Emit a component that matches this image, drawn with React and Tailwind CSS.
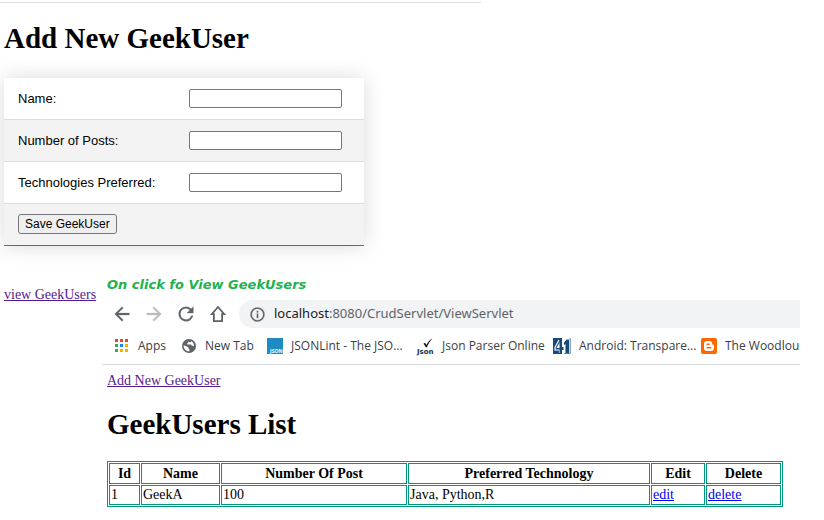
import React from "react";

const serif = "font-['Liberation_Serif',serif]";
const sans = "font-['Liberation_Sans',sans-serif]";

const fields = [
  { id: "name", label: "Name:" },
  { id: "posts", label: "Number of Posts:" },
  { id: "technologies", label: "Technologies Preferred:" },
];

function MaterialIcon({ d, className }) {
  return (
    <svg viewBox="0 0 24 24" className={className} fill="currentColor" stroke="currentColor" strokeWidth="0.3" aria-hidden="true">
      <path d={d} />
    </svg>
  );
}

function AppsIcon() {
  const colors = ["#ea4335", "#ea4335", "#ea4335", "#34a853", "#1a87f0", "#f9ab00", "#34a853", "#f9ab00", "#f9ab00"];
  return (
    <svg viewBox="0 0 16 16" className="size-4 shrink-0" aria-hidden="true" shapeRendering="crispEdges">
      {colors.map((c, i) => (
        <rect key={i} x={1 + (i % 3) * 5} y={1 + Math.floor(i / 3) * 5} width="3" height="3" fill={c} />
      ))}
    </svg>
  );
}

function GlobeIcon() {
  return (
    <svg viewBox="0 0 16 16" className="size-4 shrink-0" aria-hidden="true">
      <circle cx="8" cy="8" r="7" fill="#5f6368" />
      <path d="M2.600 7.200 6 8.400c.9.300 1.400.8 1.400 1.600v.6l1 .6v2c-3.400.2-6-2.400-5.800-6z" fill="#fff" />
      <path d="M7.300 3.200c.2 1-.1 1.700-1.100 2v1.200h3.200c.9 0 1.200.5 1.200 1.300h1.100c.5 0 .9.400 1.200.9.500-2.700-.8-4.700-2.900-5.700 0 1-.6 1.400-1.400 1.400z" fill="#fff" />
    </svg>
  );
}

function JsonLintIcon() {
  return (
    <svg viewBox="0 0 16 16" className="size-4 shrink-0" aria-hidden="true">
      <rect width="16" height="16" fill="#1e8bc3" />
      <text x="3" y="15" fontSize="5" fontWeight="700" fontFamily="Open Sans, sans-serif" fill="#fff">JSON</text>
    </svg>
  );
}

function JsonParserIcon() {
  return (
    <svg viewBox="0 0 16 16" className="size-4 shrink-0 overflow-visible" aria-hidden="true">
      <path d="M5.500 5.500 7 4.800l1.300 2.200C10 4 12 1.800 14.500.2 12 3 10 6.200 8.700 9.600H8z" fill="#111" />
      <text x="-1" y="15.500" fontSize="7" fontWeight="700" fontFamily="DejaVu Sans, sans-serif" fill="#0b2f4f">Json</text>
    </svg>
  );
}

function FortyOneIcon() {
  return (
    <svg viewBox="0 0 18 16" className="h-4 w-[18px] shrink-0" aria-hidden="true">
      <rect width="9" height="16" fill="#174a7c" />
      <path d="M6 2 2 9.500V12h4.500v3M6.500 6v3.500H4.500z" fill="none" stroke="#fff" strokeWidth="1.200" />
      <path d="M6.500 2H9v7h1.500v3H9v3.500H6.500z" fill="#174a7c" />
      <path d="M11 4.500 13.500 1.500h2.500V15h-3.500V6l-1.500 1z" fill="#174a7c" />
      <path d="M17.200 0v15.500h-6" fill="none" stroke="#5580a6" />
    </svg>
  );
}

function BloggerIcon() {
  return (
    <svg viewBox="0 0 16 16" className="size-4 shrink-0" aria-hidden="true">
      <rect width="16" height="16" rx="2" fill="#ff6600" />
      <path fillRule="evenodd" d="M6 3h2.500A2.700 2.700 0 0 1 11.200 5.700c0 .8.300 1 1 1s.8.400.8.900V10a3 3 0 0 1-3 3H6a3 3 0 0 1-3-3V6a3 3 0 0 1 3-3zm.2 2.500a.7.7 0 0 0 0 1.500h2a.7.7 0 0 0 0-1.500zm0 3.500a.7.7 0 0 0 0 1.500h3.600a.7.7 0 0 0 0-1.500z" fill="#fff" />
    </svg>
  );
}

const bookmarks = [
  { label: "Apps", Icon: AppsIcon, width: "w-[67px]" },
  { label: "New Tab", Icon: GlobeIcon, width: "w-[86px]" },
  { label: "JSONLint - The JSO...", Icon: JsonLintIcon, width: "w-[151px]" },
  { label: "Json Parser Online", Icon: JsonParserIcon, width: "w-[135px]" },
  { label: "Android: Transpare...", Icon: FortyOneIcon, width: "w-[148px]" },
  { label: "The Woodlou", Icon: BloggerIcon, width: "w-auto" },
];

function AddUserForm() {
  return (
    <form className={`${sans} ml-1 max-w-[360px] border-b border-[#009879] text-[13px] leading-5 text-black shadow-[0_0_20px_rgba(0,0,0,0.15)]`}>
      {fields.map((f) => (
        <div key={f.id} className="flex h-[42px] items-center border-b border-[#dddddd] bg-white pr-[22px] pl-3.5 even:bg-[#f3f3f3]">
          <label htmlFor={f.id} className="w-[171px] shrink-0">{f.label}</label>
          <input id={f.id} type="text" className="h-[19px] min-w-0 flex-1 rounded-xs border border-[#767676] bg-white px-1" />
        </div>
      ))}
      <div className="flex h-[41px] items-start bg-[#f3f3f3] px-3.5 pt-2.5">
        <button type="button" className="h-5 rounded-[3px] border border-[#767676] bg-[#efefef] px-1.5 text-xs">
          <span className="block leading-4">Save GeekUser</span>
        </button>
      </div>
    </form>
  );
}

function BrowserBar() {
  return (
    <div className="border-b border-[#dadce0] text-[#3c4043]">
      <div className="flex h-7 items-center gap-2.5 pl-[9px]">
        <button type="button" aria-label="Back" className="text-[#5f6368]">
          <MaterialIcon className="size-[22px]" d="M20 11H7.830l5.590-5.590L12 4l-8 8 8 8 1.410-1.410L7.830 13H20v-2z" />
        </button>
        <button type="button" aria-label="Forward" className="text-[#babcbe]">
          <MaterialIcon className="size-[22px]" d="M12 4l-1.410 1.410L16.170 11H4v2h12.170l-5.580 5.590L12 20l8-8z" />
        </button>
        <button type="button" aria-label="Reload" className="text-[#5f6368]">
          <MaterialIcon className="size-[22px]" d="M17.650 6.350A7.958 7.958 0 0 0 12 4a8 8 0 1 0 7.730 10h-2.080A6 6 0 1 1 12 6c1.660 0 3.140.690 4.220 1.780L13 11h7V4z" />
        </button>
        <button type="button" aria-label="Home" className="text-[#5f6368]">
          <svg viewBox="0 0 22 22" className="size-[22px]" fill="none" stroke="currentColor" strokeWidth="1.800" aria-hidden="true">
            <path d="M11 4 4.800 11.100H6.900V18.100h8.200v-7h2.100z" />
          </svg>
        </button>
        <div className="flex h-7 min-w-0 flex-1 items-center gap-2 rounded-l-full bg-[#f1f3f4] pl-2.5">
          <MaterialIcon className="size-[17px] shrink-0 text-[#5f6368]" d="M11 7h2v2h-2zm0 4h2v6h-2zm1-9a10 10 0 1 0 0 20 10 10 0 0 0 0-20zm0 18a8 8 0 1 1 0-16 8 8 0 0 1 0 16z" />
          <p className="truncate font-['Noto_Sans',sans-serif] text-[13px] text-[#5f6368]">
            <span className="text-[#202124]">localhost</span>:8080/CrudServlet/ViewServlet
          </p>
        </div>
      </div>
      <nav className="flex h-9 items-center overflow-hidden pl-3 font-['Open_Sans',sans-serif]">
        {bookmarks.map(({ label, Icon, width }) => (
          <a key={label} href="#" className={`flex shrink-0 items-center gap-2 text-xs whitespace-nowrap ${width}`}>
            <Icon />
            {label}
          </a>
        ))}
      </nav>
    </div>
  );
}

const columns = [
  ["Id", "w-[31px]"],
  ["Name", "w-[79px]"],
  ["Number Of Post", "w-[186px]"],
  ["Preferred Technology", "w-[242px]"],
  ["Edit", "w-[54px]"],
  ["Delete", "w-[75px]"],
];

const cell = "border border-[#009879] px-px";

function UsersTable() {
  return (
    <table className="w-full max-w-[676px] table-fixed border-separate border-spacing-px border border-[#009879] text-sm leading-[18px]">
      <colgroup>
        {columns.map(([name, width]) => (
          <col key={name} className={width} />
        ))}
      </colgroup>
      <thead>
        <tr>
          {columns.map(([name]) => (
            <th key={name} className={`${cell} h-[21px] text-center font-bold whitespace-nowrap`}>{name}</th>
          ))}
        </tr>
      </thead>
      <tbody>
        <tr>
          <td className={cell}>1</td>
          <td className={cell}>GeekA</td>
          <td className={cell}>100</td>
          <td className={cell}>Java, Python,R</td>
          <td className={cell}><a href="#" className="text-[#0000ee] underline">edit</a></td>
          <td className={cell}><a href="#" className="text-[#0000ee] underline">delete</a></td>
        </tr>
      </tbody>
    </table>
  );
}

export default function App() {
  return (
    <main className={`${serif} min-h-screen bg-white pt-0.5 text-black`}>
      <hr className="max-w-[481px] border-[#dadce0]" />
      <h1 className="mt-[19px] mb-6 ml-1 text-[29px] leading-8 font-bold">Add New GeekUser</h1>
      <AddUserForm />
      <div className="mt-[29px] flex items-start">
        <a href="#" className="mt-2.5 ml-1 w-[98px] shrink-0 text-sm leading-5 whitespace-nowrap text-[#551a8b] underline">view GeekUsers</a>
        <section className="mr-6 min-w-0 flex-1">
          <p className="mb-[5px] pl-[5px] font-['DejaVu_Sans',sans-serif] text-[13px] leading-5 font-bold text-[#22b14c] italic">On click fo View GeekUsers</p>
          <BrowserBar />
          <div className="pt-1.5 pl-[5px]">
            <a href="#" className="block text-sm leading-5 text-[#551a8b] underline">Add New GeekUser</a>
            <h1 className="mt-[17px] mb-[21px] text-[29px] leading-8 font-bold">GeekUsers List</h1>
            <UsersTable />
          </div>
        </section>
      </div>
    </main>
  );
}
